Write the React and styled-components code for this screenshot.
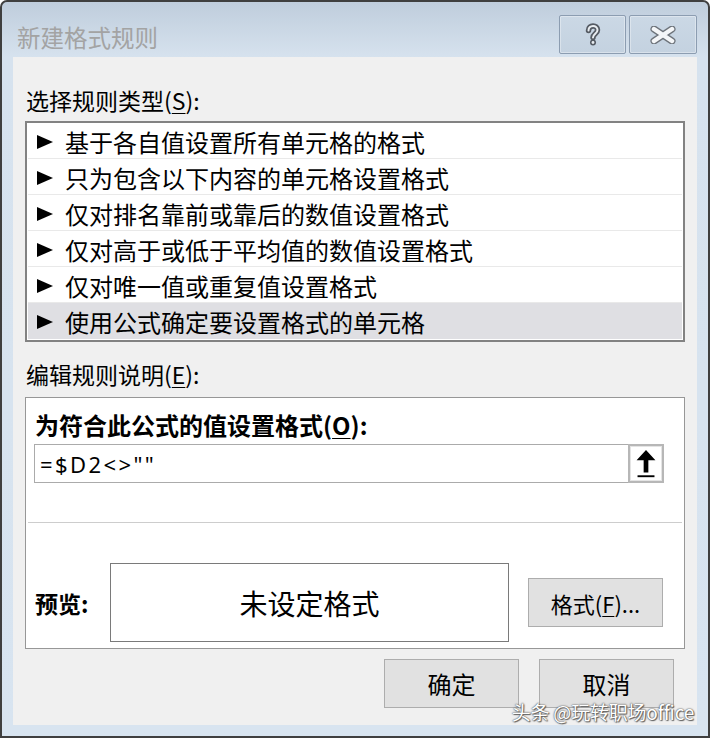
import React from 'react';
import styled, { createGlobalStyle } from 'styled-components';

const GlobalStyle = createGlobalStyle`
  html, body {
    margin: 0;
    padding: 0;
    background: #ffffff;
  }
  body {
    font-family: "Noto Sans CJK SC", "Noto Sans", sans-serif;
    color: #000;
  }
`;

const Window = styled.div`
  position: relative;
  box-sizing: border-box;
  width: 710px;
  height: 738px;
  border: 2px solid #3f3f3f;
  border-radius: 7px 7px 0 0;
  background: linear-gradient(to bottom, #bfcddc 0px, #d6e2ee 55px, #d8e4f0 100%);
  display: flex;
  flex-direction: column;
  overflow: hidden;
`;

const TitleBar = styled.div`
  height: 55px;
  display: flex;
  align-items: flex-start;
  justify-content: space-between;
  flex-shrink: 0;
`;

const Title = styled.div`
  padding-left: 15px;
  margin-top: 19px;
  font-size: 23.5px;
  line-height: 32px;
  color: #a3a3a3;
`;

const TitleButtons = styled.div`
  display: flex;
  gap: 3px;
  margin-top: 13px;
  margin-right: 11px;
`;

const TitleButton = styled.div`
  box-sizing: border-box;
  width: ${(p) => p.w}px;
  height: 39px;
  border: 1px solid #8c9db1;
  border-radius: 2px;
  background: linear-gradient(to bottom, #cbd8e5, #c4d2e0);
  box-shadow: inset 0 0 0 1px rgba(255, 255, 255, 0.35);
  display: flex;
  align-items: center;
  justify-content: center;
`;

const Client = styled.div`
  flex: 1;
  margin: 0 11px 11px 11px;
  background: #f0f0f0;
  padding: 0 12px;
  display: flex;
  flex-direction: column;
`;

const SectionLabel = styled.div`
  font-size: 23px;
  line-height: 28px;
  margin-top: ${(p) => p.top}px;
  padding-left: 1px;
  color: #000;
`;

const Key = styled.span`
  text-decoration: underline;
  text-underline-offset: 3px;
  text-decoration-thickness: 1px;
`;

const RuleList = styled.div`
  margin-top: 7px;
  border: 2px solid #828282;
  background: #fff;
  padding: 0 1px 1px 1px;
  display: flex;
  flex-direction: column;
`;

const RuleRow = styled.div`
  box-sizing: border-box;
  height: 36px;
  display: flex;
  align-items: center;
  padding: 2px 0 0 9px;
  gap: 12px;
  font-size: 24px;
  background: ${(p) => (p.selected ? '#dfdfe3' : '#fff')};
  border-bottom: 1px solid ${(p) => (p.selected ? '#dfdfe3' : '#e9e9e9')};
`;

const Triangle = styled.span`
  width: 0;
  height: 0;
  border-left: 16px solid #000;
  border-top: 7.5px solid transparent;
  border-bottom: 7.5px solid transparent;
  margin-top: 1px;
`;

const EditPanel = styled.div`
  margin-top: 9px;
  border: 1px solid #979797;
  background: #fff;
  display: flex;
  flex-direction: column;
`;

const PanelTop = styled.div`
  padding: 12px 20px 39px 8px;
  display: flex;
  flex-direction: column;
  gap: 4px;
`;

const BoldLabel = styled.div`
  font-size: 24px;
  font-weight: 700;
  line-height: 30px;
  padding-left: 1px;
`;

const FormulaBox = styled.div`
  box-sizing: border-box;
  height: 39px;
  border: 1px solid #ababab;
  display: flex;
  align-items: stretch;
`;

const FormulaText = styled.div`
  flex: 1;
  display: flex;
  align-items: center;
  padding-left: 5px;
  font-family: "Noto Sans", "Noto Sans CJK SC", sans-serif;
  font-size: 22px;
  letter-spacing: 2.4px;
`;

const CollapseButton = styled.div`
  box-sizing: border-box;
  width: 36px;
  border: 2px solid #b7b7b7;
  background: #fff;
  box-shadow: inset 0 0 0 1px #e4e4e4;
  margin: -1px -1px -1px 0;
  display: flex;
  align-items: center;
  justify-content: center;
`;

const Divider = styled.div`
  height: 1px;
  margin: 0 2px;
  background: #cdcdcd;
`;

const PreviewRow = styled.div`
  padding: 40px 20px 6px 9px;
  display: flex;
  align-items: center;
`;

const PreviewLabel = styled.div`
  width: 75px;
  font-size: 23px;
  font-weight: 700;
`;

const PreviewBox = styled.div`
  box-sizing: border-box;
  width: 399px;
  height: 79px;
  border: 1px solid #7a7a7a;
  display: flex;
  align-items: center;
  justify-content: center;
  font-size: 28px;
`;

const Button = styled.div`
  box-sizing: border-box;
  width: 135px;
  height: ${(p) => p.h || 49}px;
  border: 1px solid #adadad;
  background: #e1e1e1;
  display: flex;
  align-items: center;
  justify-content: center;
  font-size: ${(p) => p.size || 23}px;
  margin-left: ${(p) => p.ml || 0}px;
`;

const Footer = styled.div`
  margin-top: 10px;
  padding-right: 11px;
  display: flex;
  justify-content: flex-end;
  gap: 20px;
`;

const Watermark = styled.div`
  position: absolute;
  right: 14px;
  bottom: 11px;
  font-size: 19px;
  line-height: 26px;
  color: #fff;
  text-shadow: 0 0 1px #555, 0 0 2px #555, 1px 1px 1px #666;
  letter-spacing: -0.2px;
`;

const rules = [
  '基于各自值设置所有单元格的格式',
  '只为包含以下内容的单元格设置格式',
  '仅对排名靠前或靠后的数值设置格式',
  '仅对高于或低于平均值的数值设置格式',
  '仅对唯一值或重复值设置格式',
  '使用公式确定要设置格式的单元格',
];

const HelpIcon = () => (
  <svg width="16" height="24" viewBox="0 0 16 24">
    <path d="M3.5 7.5 C3.5 1.5 12.5 1.5 12.5 7 C12.5 10.5 8 11 8 14.5" fill="none" stroke="#555b63" strokeWidth="5.5" strokeLinecap="round" />
    <path d="M3.5 7.5 C3.5 1.5 12.5 1.5 12.5 7 C12.5 10.5 8 11 8 14.5" fill="none" stroke="#e9edf1" strokeWidth="2" strokeLinecap="round" />
    <circle cx="8" cy="19.5" r="3" fill="#555b63" />
    <circle cx="8" cy="19.5" r="1.4" fill="#e9edf1" />
  </svg>
);

const CloseIcon = () => (
  <svg width="26" height="18" viewBox="0 0 26 18">
    <path d="M4 3 L22 15 M22 3 L4 15" fill="none" stroke="#6d737a" strokeWidth="7" strokeLinecap="round" />
    <path d="M4 3 L22 15 M22 3 L4 15" fill="none" stroke="#f4f6f8" strokeWidth="4.5" strokeLinecap="round" />
  </svg>
);

const UpArrow = () => (
  <svg width="34" height="36" viewBox="0 0 34 36">
    <path d="M17 3 L27 14 L19.5 14 L19.5 27 L14.5 27 L14.5 14 L7 14 Z" fill="#000" />
    <rect x="8" y="30" width="18" height="2" fill="#000" />
  </svg>
);

const App = () => {
  return (
    <>
      <GlobalStyle />
      <Window>
        <TitleBar>
          <Title>新建格式规则</Title>
          <TitleButtons>
            <TitleButton w={67}>
              <HelpIcon />
            </TitleButton>
            <TitleButton w={68}>
              <CloseIcon />
            </TitleButton>
          </TitleButtons>
        </TitleBar>
        <Client>
          <SectionLabel top={29}>
            选择规则类型(<Key>S</Key>):
          </SectionLabel>
          <RuleList>
            {rules.map((r, i) => (
              <RuleRow key={r} selected={i === rules.length - 1}>
                <Triangle />
                <span>{r}</span>
              </RuleRow>
            ))}
          </RuleList>
          <SectionLabel top={18}>
            编辑规则说明(<Key>E</Key>):
          </SectionLabel>
          <EditPanel>
            <PanelTop>
              <BoldLabel>
                为符合此公式的值设置格式(<Key>O</Key>):
              </BoldLabel>
              <FormulaBox>
                <FormulaText>=$D2&lt;&gt;""</FormulaText>
                <CollapseButton>
                  <UpArrow />
                </CollapseButton>
              </FormulaBox>
            </PanelTop>
            <Divider />
            <PreviewRow>
              <PreviewLabel>预览:</PreviewLabel>
              <PreviewBox>未设定格式</PreviewBox>
              <Button ml={19} size={22}>
                格式(<Key>F</Key>)...
              </Button>
            </PreviewRow>
          </EditPanel>
          <Footer>
            <Button size={24}>确定</Button>
            <Button size={24}>取消</Button>
          </Footer>
        </Client>
        <Watermark>头条 @玩转职场office</Watermark>
      </Window>
    </>
  );
};

export default App;
